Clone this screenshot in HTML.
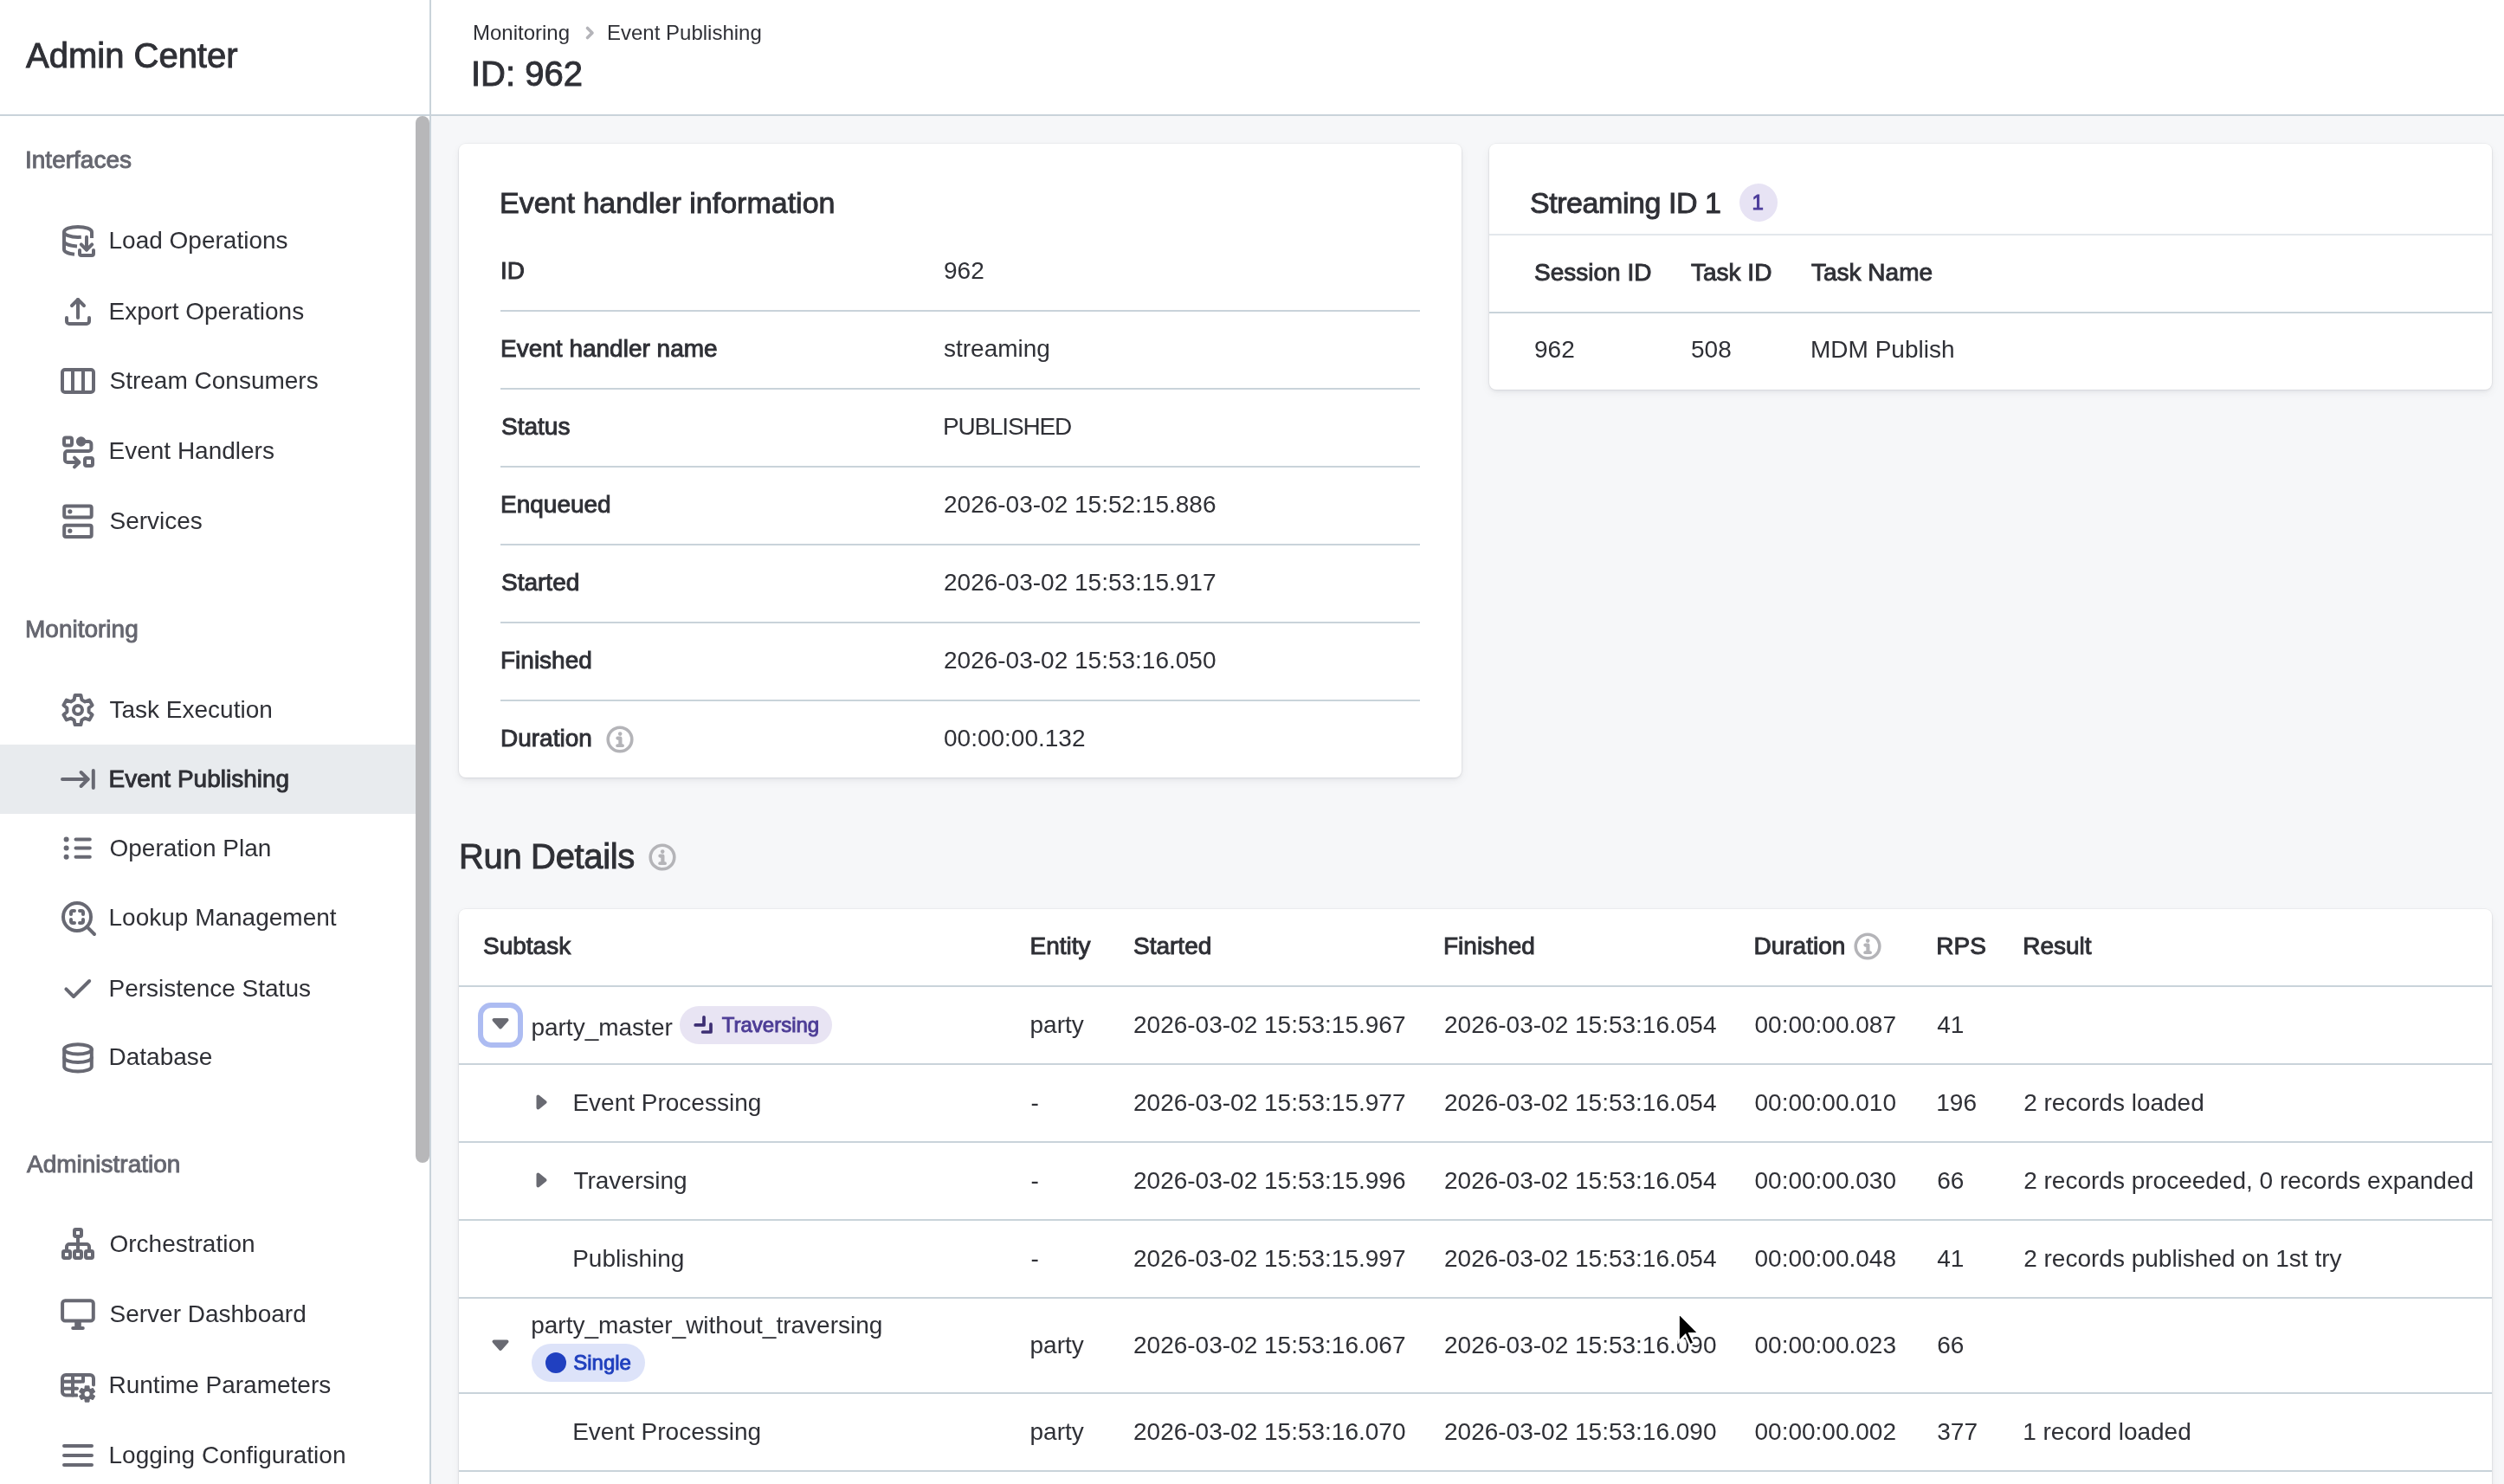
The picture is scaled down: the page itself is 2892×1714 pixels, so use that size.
<!DOCTYPE html>
<html><head><meta charset="utf-8"><title>Admin Center - Event Publishing</title>
<style>
html,body{margin:0;padding:0;}
body{width:2892px;height:1714px;position:relative;overflow:hidden;will-change:transform;background:#f6f7f9;font-family:"Liberation Sans", sans-serif;}
.t,.m{position:absolute;white-space:nowrap;line-height:1;-webkit-font-smoothing:antialiased;}
.m{-webkit-text-stroke:0.95px currentColor;}
svg{display:block;}
@media (max-width:2000px){html{zoom:0.5;}}
</style></head><body>

<div style="position:absolute;left:0px;top:0px;width:2892px;height:132px;background:#fff;"></div>
<div style="position:absolute;left:0px;top:134px;width:496px;height:1580px;background:#fff;"></div>
<div style="position:absolute;left:0px;top:132px;width:2892px;height:2px;background:#c9d3da;"></div>
<div style="position:absolute;left:496px;top:0px;width:2px;height:1714px;background:#c9d3da;"></div>
<div class="m" style="left:30.0px;top:44.1px;font-size:40px;color:#2f3036;">Admin Center</div>
<div class="t" style="left:546.0px;top:25.7px;font-size:24px;color:#2f3036;">Monitoring</div>
<svg style="position:absolute;left:670px;top:28px;" width="22" height="20" viewBox="0 0 22 20" fill="none" stroke="#b4b4b9" stroke-width="3.6" stroke-linecap="round" stroke-linejoin="round"><path d="M8.5 4.5 L14 10 L8.5 15.5"/></svg>
<div class="t" style="left:701.0px;top:25.7px;font-size:24px;color:#2f3036;">Event Publishing</div>
<div class="m" style="left:544.0px;top:65.1px;font-size:40px;color:#2f3036;">ID: 962</div>
<div style="position:absolute;left:480px;top:134px;width:16px;height:1209px;background:#b7b7b9;border-radius:8px;"></div>
<div style="position:absolute;left:0px;top:860px;width:480px;height:80px;background:#e8ebee;"></div>
<div class="m" style="left:29.0px;top:171.3px;font-size:28px;color:#666770;">Interfaces</div>
<div class="m" style="left:29.0px;top:713.3px;font-size:28px;color:#666770;">Monitoring</div>
<div class="m" style="left:31.0px;top:1331.3px;font-size:28px;color:#666770;">Administration</div>
<svg style="position:absolute;left:66px;top:254px;" width="48" height="48" viewBox="0 0 24 24" fill="none" stroke="#686973" stroke-width="2" stroke-linecap="round" stroke-linejoin="round"><path d="M13.9 9.9c-.6.05-1.25.07-1.9.07-4.4 0-8-1.34-8-3s3.6-3 8-3 8 1.34 8 3v3.5" stroke-linecap="butt"/><path d="M4 7v10c0 1.4 2.3 2.5 6 2.9" stroke-linecap="butt"/><path d="M4 12.3c0 1.5 3 2.6 7.5 2.9" stroke-linecap="butt"/><path d="M17 9.9v7.4"/><path d="M13.9 14.2l3.1 3.1 3.1-3.1"/><path d="M13 17.5v2a1 1 0 0 0 1 1h6a1 1 0 0 0 1-1v-2"/></svg>
<div class="t" style="left:125.5px;top:264.3px;font-size:28px;color:#2f3036;">Load Operations</div>
<svg style="position:absolute;left:66px;top:336px;" width="48" height="48" viewBox="0 0 24 24" fill="none" stroke="#686973" stroke-width="2" stroke-linecap="round" stroke-linejoin="round"><path d="M12 15.5V5"/><path d="M8.5 8.5L12 5l3.5 3.5"/><path d="M5.5 15.5v2a1.5 1.5 0 0 0 1.5 1.5h10a1.5 1.5 0 0 0 1.5-1.5v-2"/></svg>
<div class="t" style="left:125.5px;top:345.7px;font-size:28px;color:#2f3036;">Export Operations</div>
<svg style="position:absolute;left:66px;top:416px;" width="48" height="48" viewBox="0 0 24 24" fill="none" stroke="#686973" stroke-width="2" stroke-linecap="round" stroke-linejoin="round"><rect x="3" y="5.5" width="18" height="13" rx="1.5"/><path d="M9 5.5v13M15 5.5v13"/></svg>
<div class="t" style="left:126.5px;top:426.0px;font-size:28px;color:#2f3036;">Stream Consumers</div>
<svg style="position:absolute;left:66px;top:497px;" width="48" height="48" viewBox="0 0 24 24" fill="none" stroke="#686973" stroke-width="2" stroke-linecap="round" stroke-linejoin="round"><rect x="4" y="4.2" width="4.5" height="4.5" rx="1"/><rect x="16" y="16" width="4.5" height="4.5" rx="1"/><circle cx="13.8" cy="6.5" r="1.85" fill="#686973"/><path d="M15 6.5h3.2a1.5 1.5 0 0 1 1.5 1.5v2.5a1.5 1.5 0 0 1-1.5 1.5H6a1.5 1.5 0 0 0-1.5 1.5v3.5A1.5 1.5 0 0 0 6 18.5h6.5"/><path d="M10 15.8l2.7 2.7-2.7 2.7"/></svg>
<div class="t" style="left:125.5px;top:506.8px;font-size:28px;color:#2f3036;">Event Handlers</div>
<svg style="position:absolute;left:66px;top:578px;" width="48" height="48" viewBox="0 0 24 24" fill="none" stroke="#686973" stroke-width="2" stroke-linecap="round" stroke-linejoin="round"><rect x="4.1" y="3.3" width="15.75" height="6.5" rx="1"/><rect x="4.1" y="14.4" width="15.75" height="6.55" rx="1"/><path d="M7.4 6.4h.01M7.4 17.6h.01" stroke-width="2.6"/></svg>
<div class="t" style="left:126.5px;top:587.6px;font-size:28px;color:#2f3036;">Services</div>
<svg style="position:absolute;left:66px;top:796px;" width="48" height="48" viewBox="0 0 24 24" fill="none" stroke="#686973" stroke-width="2" stroke-linecap="round" stroke-linejoin="round"><path d="M10.3 3.5h3.4l.5 2.6 1.9 1.1 2.5-.9 1.7 2.9-2 1.7v2.2l2 1.7-1.7 2.9-2.5-.9-1.9 1.1-.5 2.6h-3.4l-.5-2.6-1.9-1.1-2.5.9-1.7-2.9 2-1.7v-2.2l-2-1.7 1.7-2.9 2.5.9 1.9-1.1z"/><circle cx="12" cy="12" r="2.5"/></svg>
<div class="t" style="left:126.5px;top:805.6px;font-size:28px;color:#2f3036;">Task Execution</div>
<svg style="position:absolute;left:66px;top:876px;" width="48" height="48" viewBox="0 0 24 24" fill="none" stroke="#686973" stroke-width="2" stroke-linecap="round" stroke-linejoin="round"><path d="M3 12h14.8"/><path d="M13.8 8l4 4-4 4"/><path d="M20.9 7v10"/></svg>
<div class="m" style="left:125.5px;top:885.7px;font-size:28px;color:#2f3036;">Event Publishing</div>
<svg style="position:absolute;left:66px;top:956px;" width="48" height="48" viewBox="0 0 24 24" fill="none" stroke="#686973" stroke-width="2" stroke-linecap="round" stroke-linejoin="round"><path d="M10.75 6.75h8.15M10.75 11.8h8.15M10.75 16.85h8.15"/><path d="M5.3 6.75h.01M5.3 11.8h.01M5.3 16.85h.01" stroke-width="3"/></svg>
<div class="t" style="left:126.5px;top:966.0px;font-size:28px;color:#2f3036;">Operation Plan</div>
<svg style="position:absolute;left:66px;top:1036px;" width="48" height="48" viewBox="0 0 24 24" fill="none" stroke="#686973" stroke-width="2" stroke-linecap="round" stroke-linejoin="round"><circle cx="11.5" cy="11.5" r="8"/><path d="M17.2 17.2L21.5 21.5"/><path d="M8 10V9a1 1 0 0 1 1-1h1M13 8h1a1 1 0 0 1 1 1v1M15 13v1a1 1 0 0 1-1 1h-1M10 15H9a1 1 0 0 1-1-1v-1"/></svg>
<div class="t" style="left:125.5px;top:1046.3px;font-size:28px;color:#2f3036;">Lookup Management</div>
<svg style="position:absolute;left:66px;top:1118px;" width="48" height="48" viewBox="0 0 24 24" fill="none" stroke="#686973" stroke-width="2" stroke-linecap="round" stroke-linejoin="round"><path d="M5.2 12.2L9.5 16.5L18.6 7.5"/></svg>
<div class="t" style="left:125.5px;top:1127.5px;font-size:28px;color:#2f3036;">Persistence Status</div>
<svg style="position:absolute;left:66px;top:1197px;" width="48" height="48" viewBox="0 0 24 24" fill="none" stroke="#686973" stroke-width="2" stroke-linecap="round" stroke-linejoin="round"><ellipse cx="12" cy="7.45" rx="7.9" ry="2.8"/><path d="M4.1 7.45v10.05c0 1.55 3.54 2.8 7.9 2.8s7.9-1.25 7.9-2.8V7.45"/><path d="M4.1 12.2c0 1.55 3.54 2.8 7.9 2.8s7.9-1.25 7.9-2.8"/></svg>
<div class="t" style="left:125.5px;top:1206.8px;font-size:28px;color:#2f3036;">Database</div>
<svg style="position:absolute;left:66px;top:1413px;" width="48" height="48" viewBox="0 0 24 24" fill="none" stroke="#686973" stroke-width="2" stroke-linecap="round" stroke-linejoin="round"><rect x="10" y="3.5" width="4" height="4" rx=".7"/><rect x="3.5" y="16" width="4" height="4" rx=".7"/><rect x="10" y="16" width="4" height="4" rx=".7"/><rect x="16.5" y="16" width="4" height="4" rx=".7"/><path d="M12 7.5V16M5.5 16v-2.5a1.5 1.5 0 0 1 1.5-1.5h10a1.5 1.5 0 0 1 1.5 1.5V16"/></svg>
<div class="t" style="left:126.5px;top:1423.1px;font-size:28px;color:#2f3036;">Orchestration</div>
<svg style="position:absolute;left:66px;top:1494px;" width="48" height="48" viewBox="0 0 24 24" fill="none" stroke="#686973" stroke-width="2" stroke-linecap="round" stroke-linejoin="round"><rect x="3.05" y="4.07" width="17.85" height="11.73" rx="1.6"/><path d="M10.1 15.8h3.8v3.4h-3.8z" fill="#686973" stroke="none"/><path d="M9.1 20h5.8"/></svg>
<div class="t" style="left:126.5px;top:1503.7px;font-size:28px;color:#2f3036;">Server Dashboard</div>
<svg style="position:absolute;left:66px;top:1576px;" width="48" height="48" viewBox="0 0 24 24" fill="none" stroke="#686973" stroke-width="2" stroke-linecap="round" stroke-linejoin="round"><path d="M11.5 17.7H5a2 2 0 0 1-2-2V8a2 2 0 0 1 2-2h14a2 2 0 0 1 2 2v3.8"/><path d="M3 9.9h11M3 13.9h8.5M9 6v11.7M15 6v3.9"/><circle cx="17.3" cy="17" r="5.4" fill="#fff" stroke="none"/><path d="M16.14 14.13 L16.29 12.62 L18.31 12.62 L18.46 14.13 L19.21 14.56 L20.59 13.93 L21.60 15.68 L20.37 16.57 L20.37 17.43 L21.60 18.32 L20.59 20.07 L19.21 19.44 L18.46 19.87 L18.31 21.38 L16.29 21.38 L16.14 19.87 L15.39 19.44 L14.01 20.07 L13.00 18.32 L14.23 17.43 L14.23 16.57 L13.00 15.68 L14.01 13.93 L15.39 14.56Z" fill="#686973" stroke="#686973" stroke-width="0.9"/><circle cx="17.3" cy="17" r="1.5" fill="#fff" stroke="none"/></svg>
<div class="t" style="left:125.5px;top:1585.9px;font-size:28px;color:#2f3036;">Runtime Parameters</div>
<svg style="position:absolute;left:66px;top:1657px;" width="48" height="48" viewBox="0 0 24 24" fill="none" stroke="#686973" stroke-width="2" stroke-linecap="round" stroke-linejoin="round"><path d="M4 6.5h16M4 12h16M4 17.5h16"/></svg>
<div class="t" style="left:125.5px;top:1666.9px;font-size:28px;color:#2f3036;">Logging Configuration</div>
<div style="position:absolute;left:530px;top:166px;width:1158px;height:732px;background:#fff;border-radius:8px;box-shadow:0 0 0 1px rgba(20,30,50,0.045),0 2px 4px rgba(20,30,50,0.07),0 4px 12px rgba(20,30,50,0.05);"></div>
<div class="m" style="left:577.0px;top:217.2px;font-size:34px;color:#2f3036;">Event handler information</div>
<div class="m" style="left:578.0px;top:299.3px;font-size:28px;color:#2f3036;">ID</div>
<div class="t" style="left:1090.0px;top:299.3px;font-size:28px;color:#2f3036;">962</div>
<div style="position:absolute;left:578px;top:358px;width:1062px;height:2px;background:#c9d3da;"></div>
<div class="m" style="left:578.0px;top:389.3px;font-size:28px;color:#2f3036;">Event handler name</div>
<div class="t" style="left:1090.0px;top:389.3px;font-size:28px;color:#2f3036;">streaming</div>
<div style="position:absolute;left:578px;top:448px;width:1062px;height:2px;background:#c9d3da;"></div>
<div class="m" style="left:579.0px;top:479.3px;font-size:28px;color:#2f3036;">Status</div>
<div class="t" style="left:1089.0px;top:479.3px;font-size:28px;color:#2f3036;letter-spacing:-1.2px;">PUBLISHED</div>
<div style="position:absolute;left:578px;top:538px;width:1062px;height:2px;background:#c9d3da;"></div>
<div class="m" style="left:578.0px;top:569.3px;font-size:28px;color:#2f3036;">Enqueued</div>
<div class="t" style="left:1090.0px;top:569.3px;font-size:28px;color:#2f3036;">2026-03-02 15:52:15.886</div>
<div style="position:absolute;left:578px;top:628px;width:1062px;height:2px;background:#c9d3da;"></div>
<div class="m" style="left:579.0px;top:659.3px;font-size:28px;color:#2f3036;">Started</div>
<div class="t" style="left:1090.0px;top:659.3px;font-size:28px;color:#2f3036;">2026-03-02 15:53:15.917</div>
<div style="position:absolute;left:578px;top:718px;width:1062px;height:2px;background:#c9d3da;"></div>
<div class="m" style="left:578.0px;top:749.3px;font-size:28px;color:#2f3036;">Finished</div>
<div class="t" style="left:1090.0px;top:749.3px;font-size:28px;color:#2f3036;">2026-03-02 15:53:16.050</div>
<div style="position:absolute;left:578px;top:808px;width:1062px;height:2px;background:#c9d3da;"></div>
<div class="m" style="left:578.0px;top:839.3px;font-size:28px;color:#2f3036;">Duration</div>
<div class="t" style="left:1090.0px;top:839.3px;font-size:28px;color:#2f3036;">00:00:00.132</div>
<svg style="position:absolute;left:700px;top:838px;" width="32" height="32" viewBox="0 0 16 16" fill="none" stroke="#b4b4b8" stroke-width="2" stroke-linecap="round" stroke-linejoin="round"><circle cx="8" cy="8" r="6.9" stroke-width="1.8"/><circle cx="8.1" cy="4.8" r="1.15" fill="#b4b4b8" stroke="none"/><path d="M6.7 7.3h1.5v4.1" stroke-width="2.1"/><path d="M6.6 11.6h2.9" stroke-width="1.9"/></svg>
<div style="position:absolute;left:1720px;top:166px;width:1158px;height:284px;background:#fff;border-radius:8px;box-shadow:0 0 0 1px rgba(20,30,50,0.045),0 2px 4px rgba(20,30,50,0.07),0 4px 12px rgba(20,30,50,0.05);"></div>
<div class="m" style="left:1767.0px;top:217.2px;font-size:34px;color:#2f3036;letter-spacing:-0.45px;">Streaming ID 1</div>
<div style="position:absolute;left:2009px;top:212px;width:44px;height:44px;background:#e7e3f4;border-radius:22px;"></div>
<div class="m" style="left:2023.5px;top:222.2px;font-size:24px;color:#4b3b9a;">1</div>
<div style="position:absolute;left:1720px;top:270px;width:1158px;height:2px;background:#e3e8ec;"></div>
<div class="m" style="left:1772.0px;top:301.3px;font-size:28px;color:#2f3036;">Session ID</div>
<div class="m" style="left:1953.0px;top:301.3px;font-size:28px;color:#2f3036;">Task ID</div>
<div class="m" style="left:2092.0px;top:301.3px;font-size:28px;color:#2f3036;">Task Name</div>
<div style="position:absolute;left:1720px;top:360px;width:1158px;height:2px;background:#c9d3da;"></div>
<div class="t" style="left:1772.0px;top:390.3px;font-size:28px;color:#2f3036;">962</div>
<div class="t" style="left:1953.0px;top:390.3px;font-size:28px;color:#2f3036;">508</div>
<div class="t" style="left:2091.0px;top:390.3px;font-size:28px;color:#2f3036;">MDM Publish</div>
<div class="m" style="left:530.0px;top:969.1px;font-size:40px;color:#2f3036;letter-spacing:-0.35px;">Run Details</div>
<svg style="position:absolute;left:749px;top:974px;" width="32" height="32" viewBox="0 0 16 16" fill="none" stroke="#b4b4b8" stroke-width="2" stroke-linecap="round" stroke-linejoin="round"><circle cx="8" cy="8" r="6.9" stroke-width="1.8"/><circle cx="8.1" cy="4.8" r="1.15" fill="#b4b4b8" stroke="none"/><path d="M6.7 7.3h1.5v4.1" stroke-width="2.1"/><path d="M6.6 11.6h2.9" stroke-width="1.9"/></svg>
<div style="position:absolute;left:530px;top:1050px;width:2348px;height:700px;background:#fff;border-radius:8px;box-shadow:0 0 0 1px rgba(20,30,50,0.045),0 2px 4px rgba(20,30,50,0.07),0 4px 12px rgba(20,30,50,0.05);"></div>
<div class="m" style="left:558.0px;top:1079.3px;font-size:28px;color:#2f3036;">Subtask</div>
<div class="m" style="left:1189.5px;top:1079.3px;font-size:28px;color:#2f3036;">Entity</div>
<div class="m" style="left:1309.0px;top:1079.3px;font-size:28px;color:#2f3036;">Started</div>
<div class="m" style="left:1667.0px;top:1079.3px;font-size:28px;color:#2f3036;">Finished</div>
<div class="m" style="left:2025.5px;top:1079.3px;font-size:28px;color:#2f3036;">Duration</div>
<div class="m" style="left:2236.3px;top:1079.3px;font-size:28px;color:#2f3036;">RPS</div>
<div class="m" style="left:2336.2px;top:1079.3px;font-size:28px;color:#2f3036;">Result</div>
<svg style="position:absolute;left:2141px;top:1077px;" width="32" height="32" viewBox="0 0 16 16" fill="none" stroke="#b4b4b8" stroke-width="2" stroke-linecap="round" stroke-linejoin="round"><circle cx="8" cy="8" r="6.9" stroke-width="1.8"/><circle cx="8.1" cy="4.8" r="1.15" fill="#b4b4b8" stroke="none"/><path d="M6.7 7.3h1.5v4.1" stroke-width="2.1"/><path d="M6.6 11.6h2.9" stroke-width="1.9"/></svg>
<div style="position:absolute;left:530px;top:1138px;width:2348px;height:2px;background:#c9d3da;"></div>
<div style="position:absolute;left:530px;top:1228px;width:2348px;height:2px;background:#c9d3da;"></div>
<div style="position:absolute;left:530px;top:1318px;width:2348px;height:2px;background:#c9d3da;"></div>
<div style="position:absolute;left:530px;top:1408px;width:2348px;height:2px;background:#c9d3da;"></div>
<div style="position:absolute;left:530px;top:1498px;width:2348px;height:2px;background:#c9d3da;"></div>
<div style="position:absolute;left:530px;top:1608px;width:2348px;height:2px;background:#c9d3da;"></div>
<div style="position:absolute;left:530px;top:1698px;width:2348px;height:2px;background:#c9d3da;"></div>
<div class="t" style="left:1189.5px;top:1169.5px;font-size:28px;color:#2f3036;">party</div>
<div class="t" style="left:1309.0px;top:1169.5px;font-size:28px;color:#2f3036;">2026-03-02 15:53:15.967</div>
<div class="t" style="left:1668.0px;top:1169.5px;font-size:28px;color:#2f3036;">2026-03-02 15:53:16.054</div>
<div class="t" style="left:2026.5px;top:1169.5px;font-size:28px;color:#2f3036;">00:00:00.087</div>
<div class="t" style="left:2237.3px;top:1169.5px;font-size:28px;color:#2f3036;">41</div>
<div class="t" style="left:1190.5px;top:1259.5px;font-size:28px;color:#2f3036;">-</div>
<div class="t" style="left:1309.0px;top:1259.5px;font-size:28px;color:#2f3036;">2026-03-02 15:53:15.977</div>
<div class="t" style="left:1668.0px;top:1259.5px;font-size:28px;color:#2f3036;">2026-03-02 15:53:16.054</div>
<div class="t" style="left:2026.5px;top:1259.5px;font-size:28px;color:#2f3036;">00:00:00.010</div>
<div class="t" style="left:2236.3px;top:1259.5px;font-size:28px;color:#2f3036;">196</div>
<div class="t" style="left:2337.2px;top:1259.5px;font-size:28px;color:#2f3036;">2 records loaded</div>
<div class="t" style="left:1190.5px;top:1349.5px;font-size:28px;color:#2f3036;">-</div>
<div class="t" style="left:1309.0px;top:1349.5px;font-size:28px;color:#2f3036;">2026-03-02 15:53:15.996</div>
<div class="t" style="left:1668.0px;top:1349.5px;font-size:28px;color:#2f3036;">2026-03-02 15:53:16.054</div>
<div class="t" style="left:2026.5px;top:1349.5px;font-size:28px;color:#2f3036;">00:00:00.030</div>
<div class="t" style="left:2237.3px;top:1349.5px;font-size:28px;color:#2f3036;">66</div>
<div class="t" style="left:2337.2px;top:1349.5px;font-size:28px;color:#2f3036;">2 records proceeded, 0 records expanded</div>
<div class="t" style="left:1190.5px;top:1439.5px;font-size:28px;color:#2f3036;">-</div>
<div class="t" style="left:1309.0px;top:1439.5px;font-size:28px;color:#2f3036;">2026-03-02 15:53:15.997</div>
<div class="t" style="left:1668.0px;top:1439.5px;font-size:28px;color:#2f3036;">2026-03-02 15:53:16.054</div>
<div class="t" style="left:2026.5px;top:1439.5px;font-size:28px;color:#2f3036;">00:00:00.048</div>
<div class="t" style="left:2237.3px;top:1439.5px;font-size:28px;color:#2f3036;">41</div>
<div class="t" style="left:2337.2px;top:1439.5px;font-size:28px;color:#2f3036;">2 records published on 1st try</div>
<div class="t" style="left:1189.5px;top:1539.5px;font-size:28px;color:#2f3036;">party</div>
<div class="t" style="left:1309.0px;top:1539.5px;font-size:28px;color:#2f3036;">2026-03-02 15:53:16.067</div>
<div class="t" style="left:1668.0px;top:1539.5px;font-size:28px;color:#2f3036;">2026-03-02 15:53:16.090</div>
<div class="t" style="left:2026.5px;top:1539.5px;font-size:28px;color:#2f3036;">00:00:00.023</div>
<div class="t" style="left:2237.3px;top:1539.5px;font-size:28px;color:#2f3036;">66</div>
<div class="t" style="left:1189.5px;top:1640.3px;font-size:28px;color:#2f3036;">party</div>
<div class="t" style="left:1309.0px;top:1640.3px;font-size:28px;color:#2f3036;">2026-03-02 15:53:16.070</div>
<div class="t" style="left:1668.0px;top:1640.3px;font-size:28px;color:#2f3036;">2026-03-02 15:53:16.090</div>
<div class="t" style="left:2026.5px;top:1640.3px;font-size:28px;color:#2f3036;">00:00:00.002</div>
<div class="t" style="left:2237.3px;top:1640.3px;font-size:28px;color:#2f3036;">377</div>
<div class="t" style="left:2336.2px;top:1640.3px;font-size:28px;color:#2f3036;">1 record loaded</div>
<div style="position:absolute;left:552px;top:1158px;width:52px;height:52px;box-sizing:border-box;border:6px solid #adbcf2;border-radius:15px;background:#fff;"></div>
<svg style="position:absolute;left:566px;top:1174px;" width="24" height="16" viewBox="0 0 24 16" fill="none" stroke="#696a72" stroke-width="2" stroke-linecap="round" stroke-linejoin="round"><path d="M4.5 4h15l-7.5 8.5z" fill="#696a72" stroke="#696a72" stroke-width="4"/></svg>
<div class="t" style="left:613.4px;top:1172.7px;font-size:28px;color:#2f3036;">party_master</div>
<div style="position:absolute;left:785px;top:1162px;width:176px;height:44px;background:#e8e4f3;border-radius:22px;"></div>
<svg style="position:absolute;left:800px;top:1170px;" width="26" height="26" viewBox="0 0 26 26" fill="none" stroke="#3d2f73" stroke-width="2" stroke-linecap="round" stroke-linejoin="round"><path d="M3.2 13.9H13V4.8M11.6 22H21V12.9" stroke-width="3.7"/></svg>
<div class="m" style="left:833.7px;top:1171.7px;font-size:24px;color:#4d3d96;">Traversing</div>
<svg style="position:absolute;left:617px;top:1262.2px;" width="18" height="22" viewBox="0 0 18 22" fill="none" stroke="#696a72" stroke-width="2" stroke-linecap="round" stroke-linejoin="round"><path d="M4.5 4.5v13l8-6.5z" fill="#696a72" stroke="#696a72" stroke-width="4"/></svg>
<div class="t" style="left:661.4px;top:1259.5px;font-size:28px;color:#2f3036;">Event Processing</div>
<svg style="position:absolute;left:617px;top:1352.2px;" width="18" height="22" viewBox="0 0 18 22" fill="none" stroke="#696a72" stroke-width="2" stroke-linecap="round" stroke-linejoin="round"><path d="M4.5 4.5v13l8-6.5z" fill="#696a72" stroke="#696a72" stroke-width="4"/></svg>
<div class="t" style="left:662.4px;top:1349.5px;font-size:28px;color:#2f3036;">Traversing</div>
<div class="t" style="left:661.2px;top:1439.5px;font-size:28px;color:#2f3036;">Publishing</div>
<svg style="position:absolute;left:566px;top:1545px;" width="24" height="18" viewBox="0 0 24 18" fill="none" stroke="#696a72" stroke-width="2" stroke-linecap="round" stroke-linejoin="round"><path d="M4.5 4.5h15l-7.5 8.5z" fill="#696a72" stroke="#696a72" stroke-width="4"/></svg>
<div class="t" style="left:613.2px;top:1517.0px;font-size:28px;color:#2f3036;">party_master_without_traversing</div>
<div style="position:absolute;left:614px;top:1552px;width:131px;height:44px;background:#dde3f9;border-radius:22px;"></div>
<div style="position:absolute;left:630px;top:1562px;width:24px;height:24px;background:#2040c0;border-radius:12px;"></div>
<div class="m" style="left:662.2px;top:1561.7px;font-size:24px;color:#1f3fbe;">Single</div>
<div class="t" style="left:661.2px;top:1640.3px;font-size:28px;color:#2f3036;">Event Processing</div>
<svg style="position:absolute;left:1936px;top:1514px" width="30" height="42" viewBox="0 0 12 17"><path d="M1 1v13.5l3.2-3.1 2.1 4.6 2-.9-2.1-4.5h4.3z" fill="#000" stroke="#fff" stroke-width="1"/></svg>
</body></html>
